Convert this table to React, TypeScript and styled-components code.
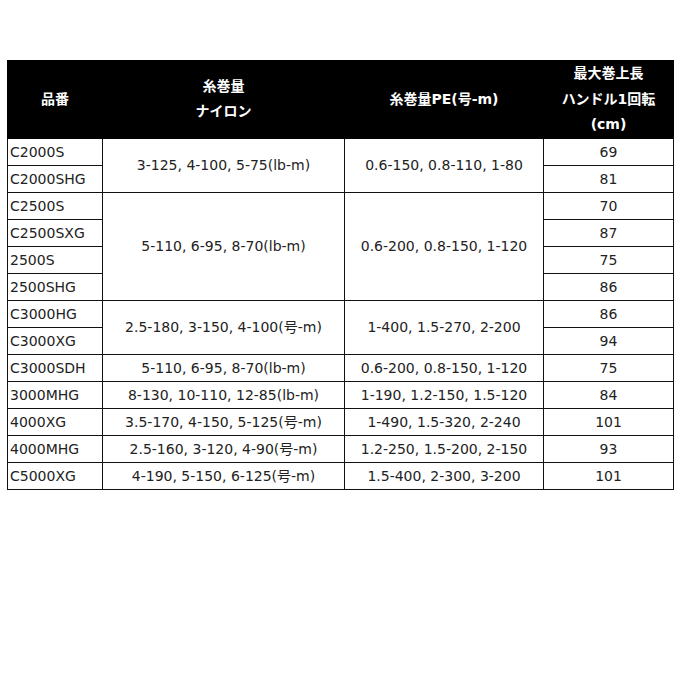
import styled, { createGlobalStyle } from "styled-components";

const GlobalStyle = createGlobalStyle`
  body {
    margin: 0;
    background: #ffffff;
    font-family: "DejaVu Sans", "Noto Sans CJK JP", sans-serif;
  }
`;

const Page = styled.div`
  padding: 60px 7px;
`;

const SpecTable = styled.table`
  width: 666px;
  border-collapse: collapse;
  table-layout: fixed;
  border: 1px solid #111;
  color: #222;
  font-size: 14px;
`;

const HeadCell = styled.th`
  background: #000;
  color: #fff;
  font-weight: bold;
  font-size: 14px;
  line-height: 25.5px;
  height: 76px;
  padding: 0;
  text-align: center;
  border: 1px solid #000;
`;

const HeadLine = styled.div`
  height: 25.5px;
  line-height: 25.5px;
`;

const Row = styled.tr`
  height: 27px;
`;

const Cell = styled.td<{ $align?: "left" | "center" }>`
  border: 1px solid #111;
  padding: 0 ${(p) => (p.$align === "left" ? "2px" : "0")};
  text-align: ${(p) => p.$align ?? "center"};
  line-height: 26px;
  white-space: nowrap;
`;

type Group = {
  nylon: string;
  pe: string;
  items: { name: string; len: string }[];
};

const groups: Group[] = [
  {
    nylon: "3-125, 4-100, 5-75(lb-m)",
    pe: "0.6-150, 0.8-110, 1-80",
    items: [
      { name: "C2000S", len: "69" },
      { name: "C2000SHG", len: "81" },
    ],
  },
  {
    nylon: "5-110, 6-95, 8-70(lb-m)",
    pe: "0.6-200, 0.8-150, 1-120",
    items: [
      { name: "C2500S", len: "70" },
      { name: "C2500SXG", len: "87" },
      { name: "2500S", len: "75" },
      { name: "2500SHG", len: "86" },
    ],
  },
  {
    nylon: "2.5-180, 3-150, 4-100(号-m)",
    pe: "1-400, 1.5-270, 2-200",
    items: [
      { name: "C3000HG", len: "86" },
      { name: "C3000XG", len: "94" },
    ],
  },
  {
    nylon: "5-110, 6-95, 8-70(lb-m)",
    pe: "0.6-200, 0.8-150, 1-120",
    items: [{ name: "C3000SDH", len: "75" }],
  },
  {
    nylon: "8-130, 10-110, 12-85(lb-m)",
    pe: "1-190, 1.2-150, 1.5-120",
    items: [{ name: "3000MHG", len: "84" }],
  },
  {
    nylon: "3.5-170, 4-150, 5-125(号-m)",
    pe: "1-490, 1.5-320, 2-240",
    items: [{ name: "4000XG", len: "101" }],
  },
  {
    nylon: "2.5-160, 3-120, 4-90(号-m)",
    pe: "1.2-250, 1.5-200, 2-150",
    items: [{ name: "4000MHG", len: "93" }],
  },
  {
    nylon: "4-190, 5-150, 6-125(号-m)",
    pe: "1.5-400, 2-300, 3-200",
    items: [{ name: "C5000XG", len: "101" }],
  },
];

export default function App() {
  return (
    <>
      <GlobalStyle />
      <Page>
        <SpecTable>
          <colgroup>
            <col style={{ width: 95 }} />
            <col style={{ width: 242 }} />
            <col style={{ width: 199 }} />
            <col style={{ width: 130 }} />
          </colgroup>
          <thead>
            <tr>
              <HeadCell>品番</HeadCell>
              <HeadCell>
                <HeadLine>糸巻量</HeadLine>
                <HeadLine>ナイロン</HeadLine>
              </HeadCell>
              <HeadCell>糸巻量PE(号-m)</HeadCell>
              <HeadCell>
                <HeadLine>最大巻上長</HeadLine>
                <HeadLine>ハンドル1回転</HeadLine>
                <HeadLine>(cm)</HeadLine>
              </HeadCell>
            </tr>
          </thead>
          <tbody>
            {groups.map((g) =>
              g.items.map((it, i) => (
                <Row key={it.name}>
                  <Cell $align="left">{it.name}</Cell>
                  {i === 0 && <Cell rowSpan={g.items.length}>{g.nylon}</Cell>}
                  {i === 0 && <Cell rowSpan={g.items.length}>{g.pe}</Cell>}
                  <Cell>{it.len}</Cell>
                </Row>
              ))
            )}
          </tbody>
        </SpecTable>
      </Page>
    </>
  );
}
